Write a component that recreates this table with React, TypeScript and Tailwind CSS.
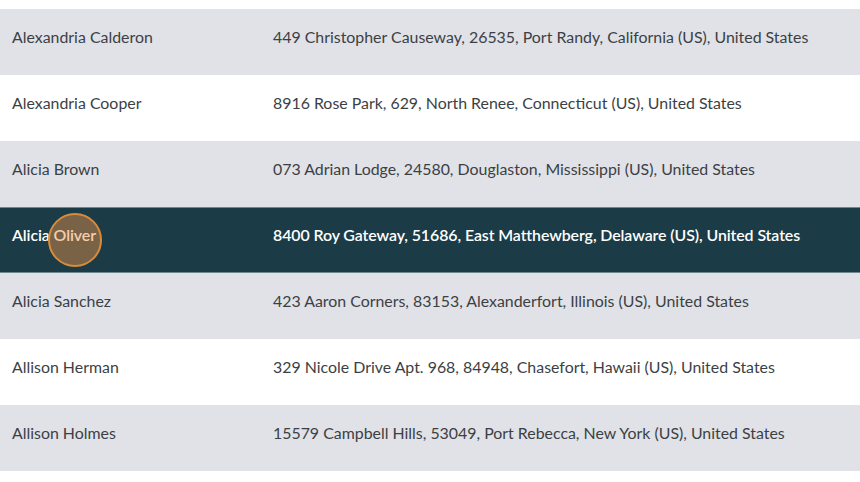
import React from "react";

type Row = { name: string; address: string };

const rows: Row[] = [
  { name: "Alexandria Calderon", address: "449 Christopher Causeway, 26535, Port Randy, California (US), United States" },
  { name: "Alexandria Cooper", address: "8916 Rose Park, 629, North Renee, Connecticut (US), United States" },
  { name: "Alicia Brown", address: "073 Adrian Lodge, 24580, Douglaston, Mississippi (US), United States" },
  { name: "Alicia Oliver", address: "8400 Roy Gateway, 51686, East Matthewberg, Delaware (US), United States" },
  { name: "Alicia Sanchez", address: "423 Aaron Corners, 83153, Alexanderfort, Illinois (US), United States" },
  { name: "Allison Herman", address: "329 Nicole Drive Apt. 968, 84948, Chasefort, Hawaii (US), United States" },
  { name: "Allison Holmes", address: "15579 Campbell Hills, 53049, Port Rebecca, New York (US), United States" },
];

export default function App() {
  return (
    <div className="h-[482px] w-[860px] overflow-hidden bg-white pt-[9px] font-['Lato',sans-serif] text-[15.9px]">
      {rows.map((row, i) => {
        const selected = i === 3;
        return (
          <div
            key={row.name}
            className={
              selected
                ? "relative flex h-[66px] items-center border-y border-[#6f8790] bg-[#1b3c47] pb-[10px] font-semibold tracking-[-0.08px] text-white"
                : i % 2 === 0
                  ? "flex h-[66px] items-center bg-[#e0e2e7] pb-[10px] text-[#3c3f44]"
                  : "flex h-[66px] items-center bg-white pb-[10px] text-[#3c3f44]"
            }
          >
            <div className="w-[273px] shrink-0 pl-3">{row.name}</div>
            <div className="whitespace-nowrap">{row.address}</div>
            {selected && (
              <div className="absolute left-[48px] top-[5px] h-[54px] w-[54px] rounded-full border-2 border-[#d98b3c] bg-[#ee9043]/45" />
            )}
          </div>
        );
      })}
    </div>
  );
}
